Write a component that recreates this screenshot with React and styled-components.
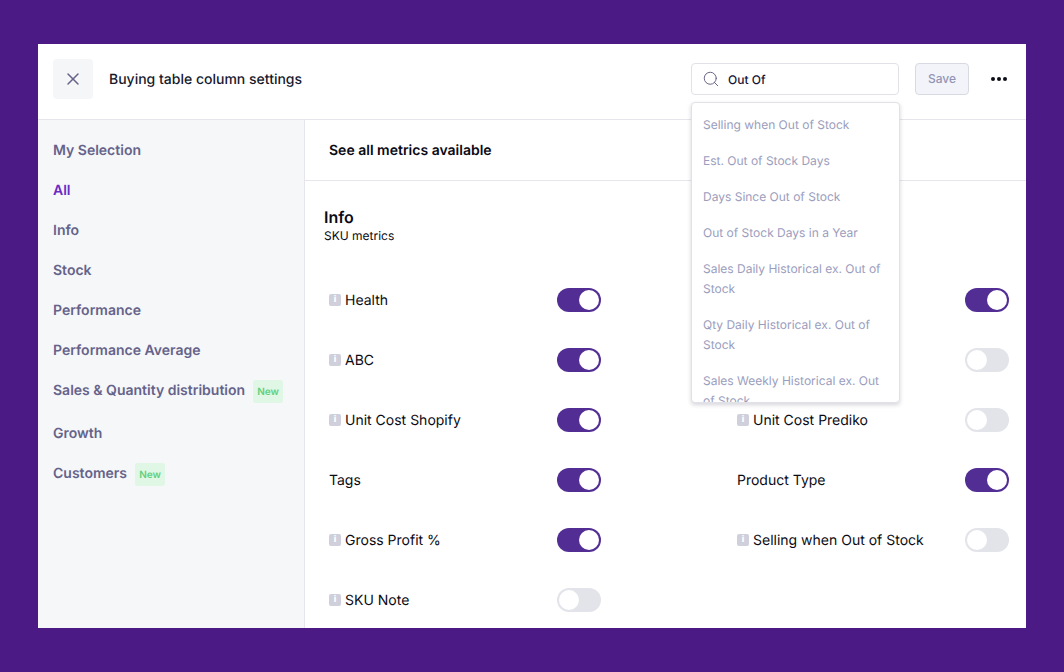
import React from "react";
import styled, { createGlobalStyle } from "styled-components";
import { X, Search } from "lucide-react";

const Global = createGlobalStyle`
  html, body { margin: 0; padding: 0; height: 100%; }
  body {
    background: #4b1a84;
    font-family: Inter, "Noto Sans", sans-serif;
    text-rendering: geometricPrecision;
  }
  * { box-sizing: border-box; }
`;

const Page = styled.div`
  width: 1064px;
  height: 672px;
  padding: 44px 38px;
  overflow: hidden;
`;
const Panel = styled.div`
  width: 988px;
  height: 584px;
  background: #fff;
  display: flex;
  flex-direction: column;
  overflow: hidden;
`;
const Header = styled.header`
  flex: none;
  height: 76px;
  display: flex;
  align-items: center;
  padding: 0 19px 5px 15px;
  border-bottom: 1px solid #e5e6eb;
`;
const CloseButton = styled.button`
  width: 40px;
  height: 40px;
  padding: 0;
  border: 0;
  border-radius: 4px;
  background: #f5f6f8;
  color: #66648a;
  display: flex;
  align-items: center;
  justify-content: center;
`;
const Title = styled.h1`
  margin: 0 0 0 16px;
  padding-top: 2px;
  font-size: 14px;
  line-height: 20px;
  font-weight: 500;
  color: #16192c;
  flex: 1;
`;
const SearchWrap = styled.div`
  position: relative;
  width: 208px;
  margin-right: 16px;
`;
const SearchBox = styled.div`
  height: 32px;
  border: 1px solid #e1e2e7;
  border-radius: 4px;
  display: flex;
  align-items: center;
  gap: 8px;
  padding: 0 10px;
  color: #5f5d80;
  font-size: 12px;
  font-weight: 500;
  span { color: #14123a; }
`;
const Dropdown = styled.div`
  position: absolute;
  top: 39px;
  left: 0;
  width: 209px;
  height: 301px;
  padding-top: 4px;
  background: #fff;
  border: 1px solid #e1e2e7;
  border-radius: 4px;
  box-shadow: 0 2px 4px rgba(30, 30, 60, 0.18);
  overflow: hidden;
  z-index: 2;
`;
const Option = styled.div`
  padding: 8px 11px;
  font-size: 12px;
  line-height: 20px;
  color: #9b9dbd;
`;
const SaveButton = styled.button`
  width: 54px;
  height: 32px;
  padding: 0 0 2px;
  border: 1px solid #d8dae3;
  border-radius: 4px;
  background: #f3f4f9;
  color: #9294b5;
  font-family: inherit;
  font-size: 12px;
  font-weight: 500;
`;
const More = styled.div`
  margin-left: 22px;
  display: flex;
  gap: 2px;
  i { width: 4px; height: 4px; border-radius: 50%; background: #0d0d1a; display: block; }
`;
const Body = styled.div`
  flex: 1;
  display: flex;
  min-height: 0;
`;
const Sidebar = styled.nav`
  flex: none;
  width: 267px;
  background: #f6f7f9;
  border-right: 1px solid #e5e6eb;
  padding: 20px 0 0 15px;
`;
const NavItem = styled.div`
  display: flex;
  align-items: flex-start;
  margin-bottom: 18px;
  font-size: 14px;
  line-height: 22px;
  font-weight: 600;
  color: ${(p) => (p.$active ? "#6a2cc4" : "#65638a")};
`;
const Badge = styled.span`
  margin: 0 0 2px 8px;
  width: 30px;
  height: 23px;
  border-radius: 3px;
  background: #dff7e4;
  color: #5fd07f;
  font-size: 10px;
  font-weight: 600;
  display: flex;
  align-items: center;
  justify-content: center;
`;
const Main = styled.main`
  flex: 1;
  min-width: 0;
`;
const SubHeader = styled.div`
  height: 61px;
  padding: 0 0 0 24px;
  display: flex;
  align-items: center;
  border-bottom: 1px solid #e5e6eb;
  font-size: 14px;
  font-weight: 600;
  color: #0a0a14;
`;
const Section = styled.section`
  padding: 25px 17px 0 19px;
`;
const SectionTitle = styled.h2`
  margin: 0;
  font-size: 16px;
  line-height: 22px;
  font-weight: 600;
  color: #0a0a14;
`;
const SectionSub = styled.p`
  margin: 0;
  font-size: 12px;
  line-height: 16px;
  color: #0a0a14;
`;
const Grid = styled.div`
  margin-top: 26px;
  padding-left: 5px;
  display: grid;
  grid-template-columns: 272px 272px;
  column-gap: 136px;
  grid-auto-rows: 60px;
`;
const Row = styled.div`
  display: flex;
  align-items: center;
  justify-content: space-between;
`;
const Label = styled.div`
  display: flex;
  align-items: center;
  gap: 4px;
  padding-top: 2px;
  font-size: 14px;
  line-height: 20px;
  color: #0b0b14;
`;
const InfoIcon = styled.span`
  width: 12px;
  height: 12px;
  margin-bottom: 2px;
  border-radius: 2px;
  background: #d0d0dc;
  color: #fff;
  font-size: 9px;
  line-height: 12px;
  font-weight: 800;
  text-align: center;
`;
const Toggle = styled.div`
  width: 44px;
  height: 24px;
  border-radius: 12px;
  padding: 2px;
  display: flex;
  justify-content: ${(p) => (p.$on ? "flex-end" : "flex-start")};
  background: ${(p) => (p.$on ? "#522d94" : "#e3e4e9")};
  &::after {
    content: "";
    width: 20px;
    height: 20px;
    border-radius: 50%;
    background: #fff;
  }
`;

const nav = [
  ["My Selection"],
  ["All", false, true],
  ["Info"],
  ["Stock"],
  ["Performance"],
  ["Performance Average"],
  ["Sales & Quantity distribution", true],
  ["Growth"],
  ["Customers", true],
];
const options = [
  "Selling when Out of Stock",
  "Est. Out of Stock Days",
  "Days Since Out of Stock",
  "Out of Stock Days in a Year",
  "Sales Daily Historical ex. Out of Stock",
  "Qty Daily Historical ex. Out of Stock",
  "Sales Weekly Historical ex. Out of Stock",
];
const rows = [
  ["Health", true, true],
  ["", false, true],
  ["ABC", true, true],
  ["", false, false],
  ["Unit Cost Shopify", true, true],
  ["Unit Cost Prediko", true, false],
  ["Tags", false, true],
  ["Product Type", false, true],
  ["Gross Profit %", true, true],
  ["Selling when Out of Stock", true, false],
  ["SKU Note", true, false],
];

export default function App() {
  return (
    <Page>
      <Global />
      <Panel>
        <Header>
          <CloseButton aria-label="Close">
            <X size={20} strokeWidth={1.8} />
          </CloseButton>
          <Title>Buying table column settings</Title>
          <SearchWrap>
            <SearchBox>
              <Search size={18} strokeWidth={1.25} />
              <span>Out Of</span>
            </SearchBox>
            <Dropdown>
              {options.map((o) => (
                <Option key={o}>{o}</Option>
              ))}
            </Dropdown>
          </SearchWrap>
          <SaveButton>Save</SaveButton>
          <More>
            <i />
            <i />
            <i />
          </More>
        </Header>
        <Body>
          <Sidebar>
            {nav.map(([name, badge, active]) => (
              <NavItem key={name} $active={active}>
                {name}
                {badge && <Badge>New</Badge>}
              </NavItem>
            ))}
          </Sidebar>
          <Main>
            <SubHeader>See all metrics available</SubHeader>
            <Section>
              <SectionTitle>Info</SectionTitle>
              <SectionSub>SKU metrics</SectionSub>
              <Grid>
                {rows.map(([name, info, on], i) => (
                  <Row key={i}>
                    <Label>
                      {info && <InfoIcon>i</InfoIcon>}
                      {name}
                    </Label>
                    <Toggle $on={on} />
                  </Row>
                ))}
              </Grid>
            </Section>
          </Main>
        </Body>
      </Panel>
    </Page>
  );
}
